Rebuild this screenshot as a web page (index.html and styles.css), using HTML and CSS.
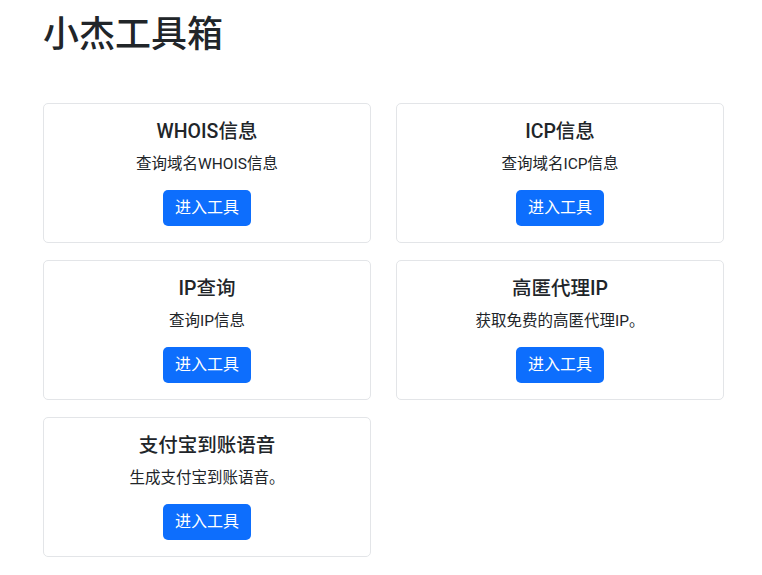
FILE: index.html
```html
<!DOCTYPE html>
<html lang="zh-CN">
<head>
<meta charset="utf-8">
<title>小杰工具箱</title>
<link rel="stylesheet" href="styles.css">
</head>
<body>
<div class="container">
  <h1 class="page-title">小杰工具箱</h1>
  <div class="grid">
    <div class="card">
      <h5 class="card-title">WHOIS信息</h5>
      <p class="card-text">查询域名WHOIS信息</p>
      <a class="btn" href="#">进入工具</a>
    </div>
    <div class="card">
      <h5 class="card-title">ICP信息</h5>
      <p class="card-text">查询域名ICP信息</p>
      <a class="btn" href="#">进入工具</a>
    </div>
    <div class="card">
      <h5 class="card-title">IP查询</h5>
      <p class="card-text">查询IP信息</p>
      <a class="btn" href="#">进入工具</a>
    </div>
    <div class="card">
      <h5 class="card-title">高匿代理IP</h5>
      <p class="card-text">获取免费的高匿代理IP。</p>
      <a class="btn" href="#">进入工具</a>
    </div>
    <div class="card">
      <h5 class="card-title">支付宝到账语音</h5>
      <p class="card-text">生成支付宝到账语音。</p>
      <a class="btn" href="#">进入工具</a>
    </div>
  </div>
</div>
</body>
</html>
```
FILE: styles.css
```css
* { box-sizing: border-box; }
html, body {
  margin: 0;
  padding: 0;
  background: #fff;
}
body {
  font-family: Roboto, "Noto Sans CJK SC", sans-serif;
  color: #212529;
  font-size: 16px;
  line-height: 1.5;
}
.container {
  padding: 14px 38px 0 43px;
}
.page-title {
  margin: 0 0 46px 0;
  font-size: 36px;
  font-weight: 500;
  line-height: 1.2;
}
.grid {
  display: grid;
  grid-template-columns: 1fr 1fr;
  column-gap: 25px;
  row-gap: 17px;
}
.card {
  height: 140px;
  border: 1px solid #e3e5e8;
  border-radius: 5px;
  padding: 16px 16px;
  text-align: center;
  display: flex;
  flex-direction: column;
  align-items: center;
}
.card-title {
  margin: 0 0 9px 0;
  font-size: 19.5px;
  font-weight: 500;
  line-height: 1.2;
}
.card-text {
  margin: 0 0 14px 0;
  font-size: 15.5px;
  line-height: 1.5;
}
.btn {
  display: inline-block;
  background: #0d6efd;
  color: #fff;
  text-decoration: none;
  font-size: 16px;
  line-height: 1.5;
  padding: 6px 12px;
  border-radius: 5px;
  height: 37px;
}
```
